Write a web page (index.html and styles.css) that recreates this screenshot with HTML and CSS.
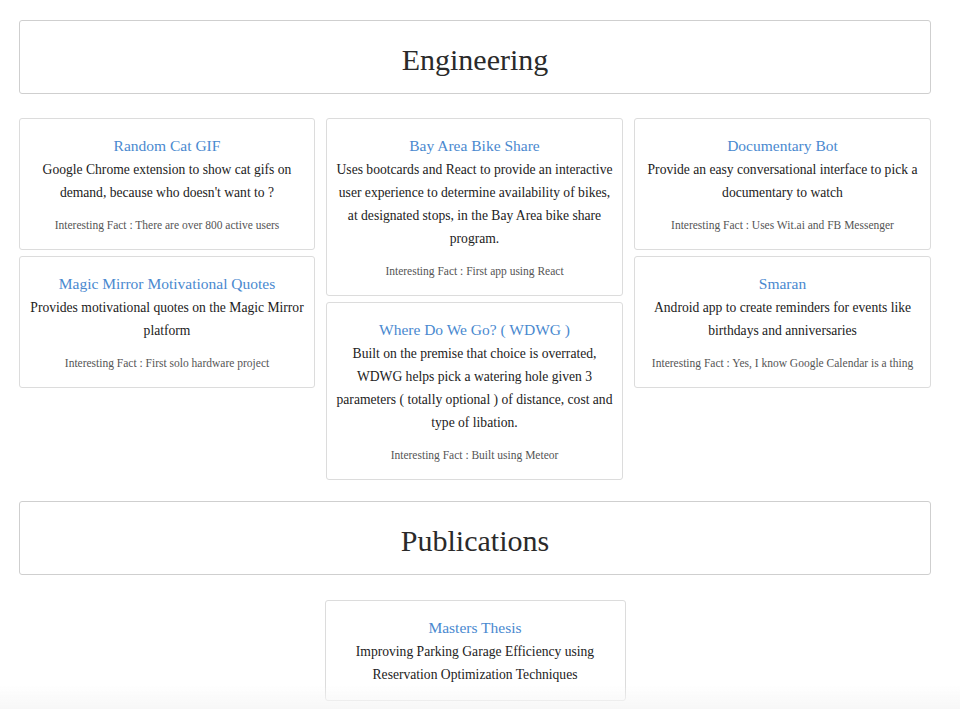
FILE: index.html
```html
<!DOCTYPE html>
<html>
<head>
<meta charset="utf-8">
<link rel="stylesheet" href="styles.css">
</head>
<body>
<main class="page">
  <section class="section">
    <header class="section-head"><h1>Engineering</h1></header>
    <div class="grid">
      <div class="col">
        <article class="card">
          <h2 class="card-title">Random Cat GIF</h2>
          <p class="card-desc">Google Chrome extension to show cat gifs on demand, because who doesn't want to ?</p>
          <p class="card-fact">Interesting Fact : There are over 800 active users</p>
        </article>
        <article class="card">
          <h2 class="card-title">Magic Mirror Motivational Quotes</h2>
          <p class="card-desc">Provides motivational quotes on the Magic Mirror platform</p>
          <p class="card-fact">Interesting Fact : First solo hardware project</p>
        </article>
      </div>
      <div class="col">
        <article class="card">
          <h2 class="card-title">Bay Area Bike Share</h2>
          <p class="card-desc">Uses bootcards and React to provide an interactive user experience to determine availability of bikes, at designated stops, in the Bay Area bike share program.</p>
          <p class="card-fact">Interesting Fact : First app using React</p>
        </article>
        <article class="card">
          <h2 class="card-title">Where Do We Go? ( WDWG )</h2>
          <p class="card-desc">Built on the premise that choice is overrated, WDWG helps pick a watering hole given 3 parameters ( totally optional ) of distance, cost and type of libation.</p>
          <p class="card-fact">Interesting Fact : Built using Meteor</p>
        </article>
      </div>
      <div class="col">
        <article class="card">
          <h2 class="card-title">Documentary Bot</h2>
          <p class="card-desc">Provide an easy conversational interface to pick a documentary to watch</p>
          <p class="card-fact">Interesting Fact : Uses Wit.ai and FB Messenger</p>
        </article>
        <article class="card">
          <h2 class="card-title">Smaran</h2>
          <p class="card-desc">Android app to create reminders for events like birthdays and anniversaries</p>
          <p class="card-fact">Interesting Fact : Yes, I know Google Calendar is a thing</p>
        </article>
      </div>
    </div>
  </section>
  <section class="section">
    <header class="section-head"><h1>Publications</h1></header>
    <div class="single">
      <article class="card card-pub">
        <h2 class="card-title">Masters Thesis</h2>
        <p class="card-desc">Improving Parking Garage Efficiency using Reservation Optimization Techniques</p>
      </article>
    </div>
  </section>
</main>
<div class="fade"></div>
</body>
</html>
```
FILE: styles.css
```css
* { box-sizing: border-box; }
html, body { margin: 0; padding: 0; background: #fff; }
body {
  font-family: "Liberation Serif", "Times New Roman", serif;
  color: #222;
}
.page {
  width: 912px;
  margin: 0 0 0 19px;
  padding-top: 20px;
}
.section { margin-bottom: 21px; }
.section-head {
  height: 74px;
  border: 1px solid #cfcfcf;
  border-radius: 3px;
  display: flex;
  align-items: center;
  justify-content: center;
}
.section-head h1 {
  margin: 0;
  font-weight: normal;
  font-size: 30px;
  color: #2a2a2a;
  line-height: 1;
  padding-top: 5px;
}
.grid {
  margin-top: 24px;
  display: grid;
  grid-template-columns: 296px 297px 297px;
  column-gap: 11px;
  align-items: start;
}
.col { display: flex; flex-direction: column; gap: 6px; }
.card {
  border: 1px solid #dcdcdc;
  border-radius: 3px;
  text-align: center;
  padding: 15px 8px 16px;
}
.card-title {
  margin: 0;
  font-weight: normal;
  font-size: 15.5px;
  line-height: 24px;
  color: #4a89cf;
}
.card-desc {
  margin: 0;
  font-size: 13.6px;
  line-height: 23px;
  color: #222;
}
.card-fact {
  margin: 13px 0 0;
  font-size: 11.5px;
  line-height: 16px;
  color: #555;
}
.single {
  margin-top: 25px;
  display: flex;
  justify-content: center;
}
.card-pub { width: 301px; padding-bottom: 14px; }
.fade {
  position: fixed;
  left: 0; right: 0; bottom: 0;
  height: 24px;
  background: linear-gradient(to bottom, rgba(248,248,248,0), #f7f7f7);
  pointer-events: none;
}
```
